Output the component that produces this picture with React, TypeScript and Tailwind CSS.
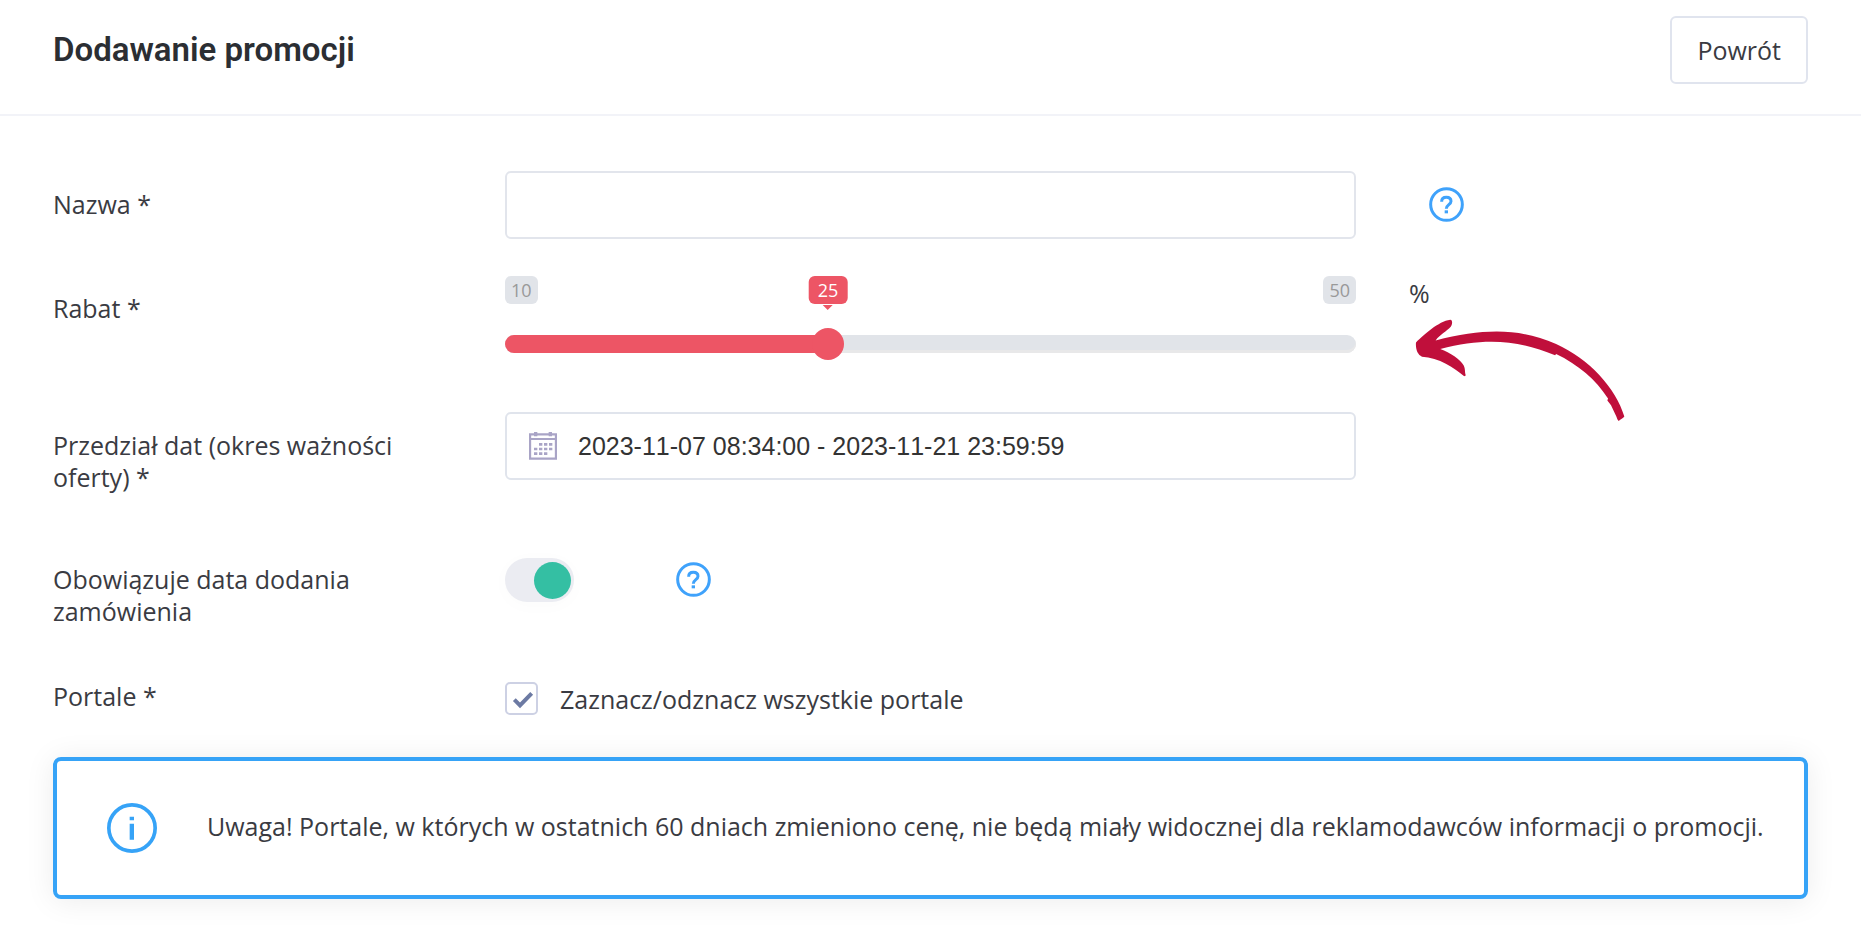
import { useState, type ReactNode } from "react";

const MIN = 10;
const MAX = 50;

function HelpIcon() {
  return (
    <svg viewBox="0 0 105 105" className="size-[35px]" fill="none" stroke="#3fa2fb" aria-hidden="true">
      <circle cx="52.5" cy="52.5" r="47.5" strokeWidth="9" />
      <path d="M38 44c0-9 6-13 14-13s14 4 14 12c0 10-14 10-14 22" strokeWidth="9" />
      <path d="M52 70v9" strokeWidth="10" />
    </svg>
  );
}

function InfoIcon() {
  return (
    <svg viewBox="0 0 150 150" className="size-[50px] shrink-0" aria-hidden="true">
      <circle cx="75" cy="75" r="69.5" fill="none" stroke="#36a3f7" strokeWidth="11" />
      <path d="M68 41h13v11H68zM68 62h13v48H68z" fill="#36a3f7" />
    </svg>
  );
}

function CalendarIcon() {
  return (
    <svg viewBox="0 0 84 84" className="size-7 shrink-0" fill="none" stroke="#a9a4c6" aria-hidden="true">
      <path d="M3 7h78v73H3z" strokeWidth="7" />
      <path d="M3 21h78" strokeWidth="6" />
      <path d="M20 0v13M64 0v13" strokeWidth="10" />
      <path d="M30 37h10M45 37h10M60 37h10M15 51h10M30 51h10M45 51h10M60 51h10M15 65h10M30 65h10M45 65h10" strokeWidth="8" />
    </svg>
  );
}

// Strzałka wskazująca suwak rabatu
function Arrow() {
  return (
    <svg
      viewBox="490 475 640 315"
      className="pointer-events-none absolute top-[43px] left-1 h-[105px] w-[213px]"
      fill="#c00f3b"
      aria-hidden="true"
    >
      <path d="M499 548C524 524 566 485 602 480C609 480 609 493 604 500C592 514 570 524 558 542C705 505 810 505 920 553C1018 597 1100 685 1125 771C1121 776 1114 780 1108 784C1104 782 1103 775 1101 771L1085 737L1074 723L1076 717C1040 660 985 614 920 583L917 587C805 540 705 534 572 568C602 580 632 598 642 617C648 628 645 641 649 647L644 650C616 625 567 593 517 591C504 586 497 568 499 548Z" />
    </svg>
  );
}

function Row({ label, htmlFor, children }: { label: string; htmlFor: string; children: ReactNode }) {
  return (
    <div className="grid grid-cols-12 gap-x-[53px]">
      <label htmlFor={htmlFor} className="col-span-3 pt-[17px]">
        {label}
      </label>
      {children}
    </div>
  );
}

export default function App() {
  const [name, setName] = useState("");
  const [discount, setDiscount] = useState(25);
  const [range, setRange] = useState("2023-11-07 08:34:00 - 2023-11-21 23:59:59");
  const [orderDate, setOrderDate] = useState(true);
  const [allPortals, setAllPortals] = useState(true);

  // środek uchwytu (32px) na ścieżce
  const ratio = (discount - MIN) / (MAX - MIN);
  const handle = `calc(16px + (100% - 32px) * ${ratio})`;

  return (
    <main className="min-h-screen bg-white pb-[26px] font-['Open_Sans',sans-serif] text-[25px] leading-8 text-[#3a3b42]">
      <header className="flex items-center justify-between border-b-2 border-[#f2f3f8] px-[53px] pt-4 pb-[30px]">
        <h1 className="font-[Roboto,sans-serif] text-[33px] leading-10 font-semibold text-[#2b2e33]">
          Dodawanie promocji
        </h1>
        <button type="button" className="h-[68px] rounded-md border-2 border-[#e0e4ee] px-[25px]">
          Powrót
        </button>
      </header>

      <form className="flex flex-col gap-9 px-[53px] pt-[55px]">
        <Row label="Nazwa *" htmlFor="name">
          <input
            id="name"
            type="text"
            value={name}
            onChange={(e) => setName(e.target.value)}
            className="col-span-6 h-[68px] w-full rounded-md border-2 border-[#e2e5ec] px-6 outline-none"
          />
          <div className="col-span-3 pt-4 pl-5">
            <button type="button" aria-label="Pomoc: nazwa" className="block">
              <HelpIcon />
            </button>
          </div>
        </Row>

        <Row label="Rabat *" htmlFor="discount">
          <div className="col-span-6 flex flex-col gap-6 pb-4">
            <div className="relative flex justify-between pt-px text-[18px] leading-7 text-[#999999]">
              <span className="rounded-md bg-[#e1e4e9] px-1.5">{MIN}</span>
              <span className="rounded-md bg-[#e1e4e9] px-1.5">{MAX}</span>
              <output
                htmlFor="discount"
                className="absolute -translate-x-1/2 rounded-md bg-[#ed5565] px-[9px] text-white after:absolute after:top-[29px] after:left-1/2 after:-translate-x-1/2 after:border-x-5 after:border-t-5 after:border-x-transparent after:border-t-[#ed5565]"
                style={{ left: handle }}
              >
                {discount}
              </output>
            </div>
            <div className="relative flex h-8 items-center">
              <div className="h-[18px] w-full overflow-hidden rounded-full bg-[#e1e4e9] shadow-[inset_0_-3px_#e8e8e9]">
                <div className="h-full bg-[#ed5565]" style={{ width: handle }} />
              </div>
              <input
                id="discount"
                type="range"
                min={MIN}
                max={MAX}
                value={discount}
                onChange={(e) => setDiscount(Number(e.target.value))}
                className="absolute inset-0 h-8 w-full cursor-pointer appearance-none bg-transparent [&::-webkit-slider-thumb]:size-8 [&::-webkit-slider-thumb]:appearance-none [&::-webkit-slider-thumb]:rounded-full [&::-webkit-slider-thumb]:bg-[#ed5565]"
              />
            </div>
          </div>
          <div className="relative col-span-3 pt-0.5">
            %
            <Arrow />
          </div>
        </Row>

        <Row label="Przedział dat (okres ważności oferty) *" htmlFor="range">
          <div className="col-span-6 flex h-[68px] items-center gap-[21px] rounded-md border-2 border-[#e0e4ec] px-[22px]">
            <CalendarIcon />
            <input
              id="range"
              type="text"
              value={range}
              onChange={(e) => setRange(e.target.value)}
              className="min-w-0 flex-1 font-['Liberation_Sans',sans-serif] [font-kerning:none] text-[#333333] outline-none"
            />
          </div>
        </Row>

        <div className="mt-[17px]">
          <Row label="Obowiązuje data dodania zamówienia" htmlFor="order-date">
            <div className="pt-3">
              <input
                id="order-date"
                type="checkbox"
                role="switch"
                checked={orderDate}
                onChange={(e) => setOrderDate(e.target.checked)}
                className="flex h-11 w-[69px] cursor-pointer appearance-none items-center rounded-full bg-[#ebecf2] px-[3px] shadow-[0_3px_20px_rgba(0,0,0,0.02)] before:size-[37px] before:rounded-full before:bg-white checked:justify-end checked:before:bg-[#34bfa3]"
              />
            </div>
            <div className="pt-4 pl-5">
              <button type="button" aria-label="Pomoc: data dodania zamówienia" className="block">
                <HelpIcon />
              </button>
            </div>
          </Row>
        </div>

        <div className="grid grid-cols-12 gap-x-[53px]">
          <span className="col-span-3 pt-[17px]">Portale *</span>
          <label className="col-span-9 flex items-center gap-[22px] pt-[19px]">
            <span className="grid">
              <input
                type="checkbox"
                checked={allPortals}
                onChange={(e) => setAllPortals(e.target.checked)}
                className="peer col-start-1 row-start-1 size-[33px] appearance-none rounded-[5px] border-2 border-[#cdd1e4]"
              />
              <svg
                viewBox="0 0 99 99"
                className="pointer-events-none invisible col-start-1 row-start-1 size-[33px] peer-checked:visible"
                fill="none"
                stroke="#6c7aa3"
                strokeWidth="12"
                aria-hidden="true"
              >
                <path d="M28 53l17 17 35-36" />
              </svg>
            </span>
            Zaznacz/odznacz wszystkie portale
          </label>
        </div>
      </form>

      <div className="px-[53px] pt-[42px]">
        <div
          role="alert"
          className="flex min-h-[142px] items-center gap-[50px] rounded-lg border-4 border-[#36a3f7] pr-9 pl-[50px] shadow-[0_2px_30px_rgba(0,0,0,0.08)]"
        >
          <InfoIcon />
          <p className="pb-1">
            Uwaga! Portale, w których w ostatnich 60 dniach zmieniono cenę, nie będą miały widocznej dla reklamodawców
            informacji o promocji.
          </p>
        </div>
      </div>
    </main>
  );
}
